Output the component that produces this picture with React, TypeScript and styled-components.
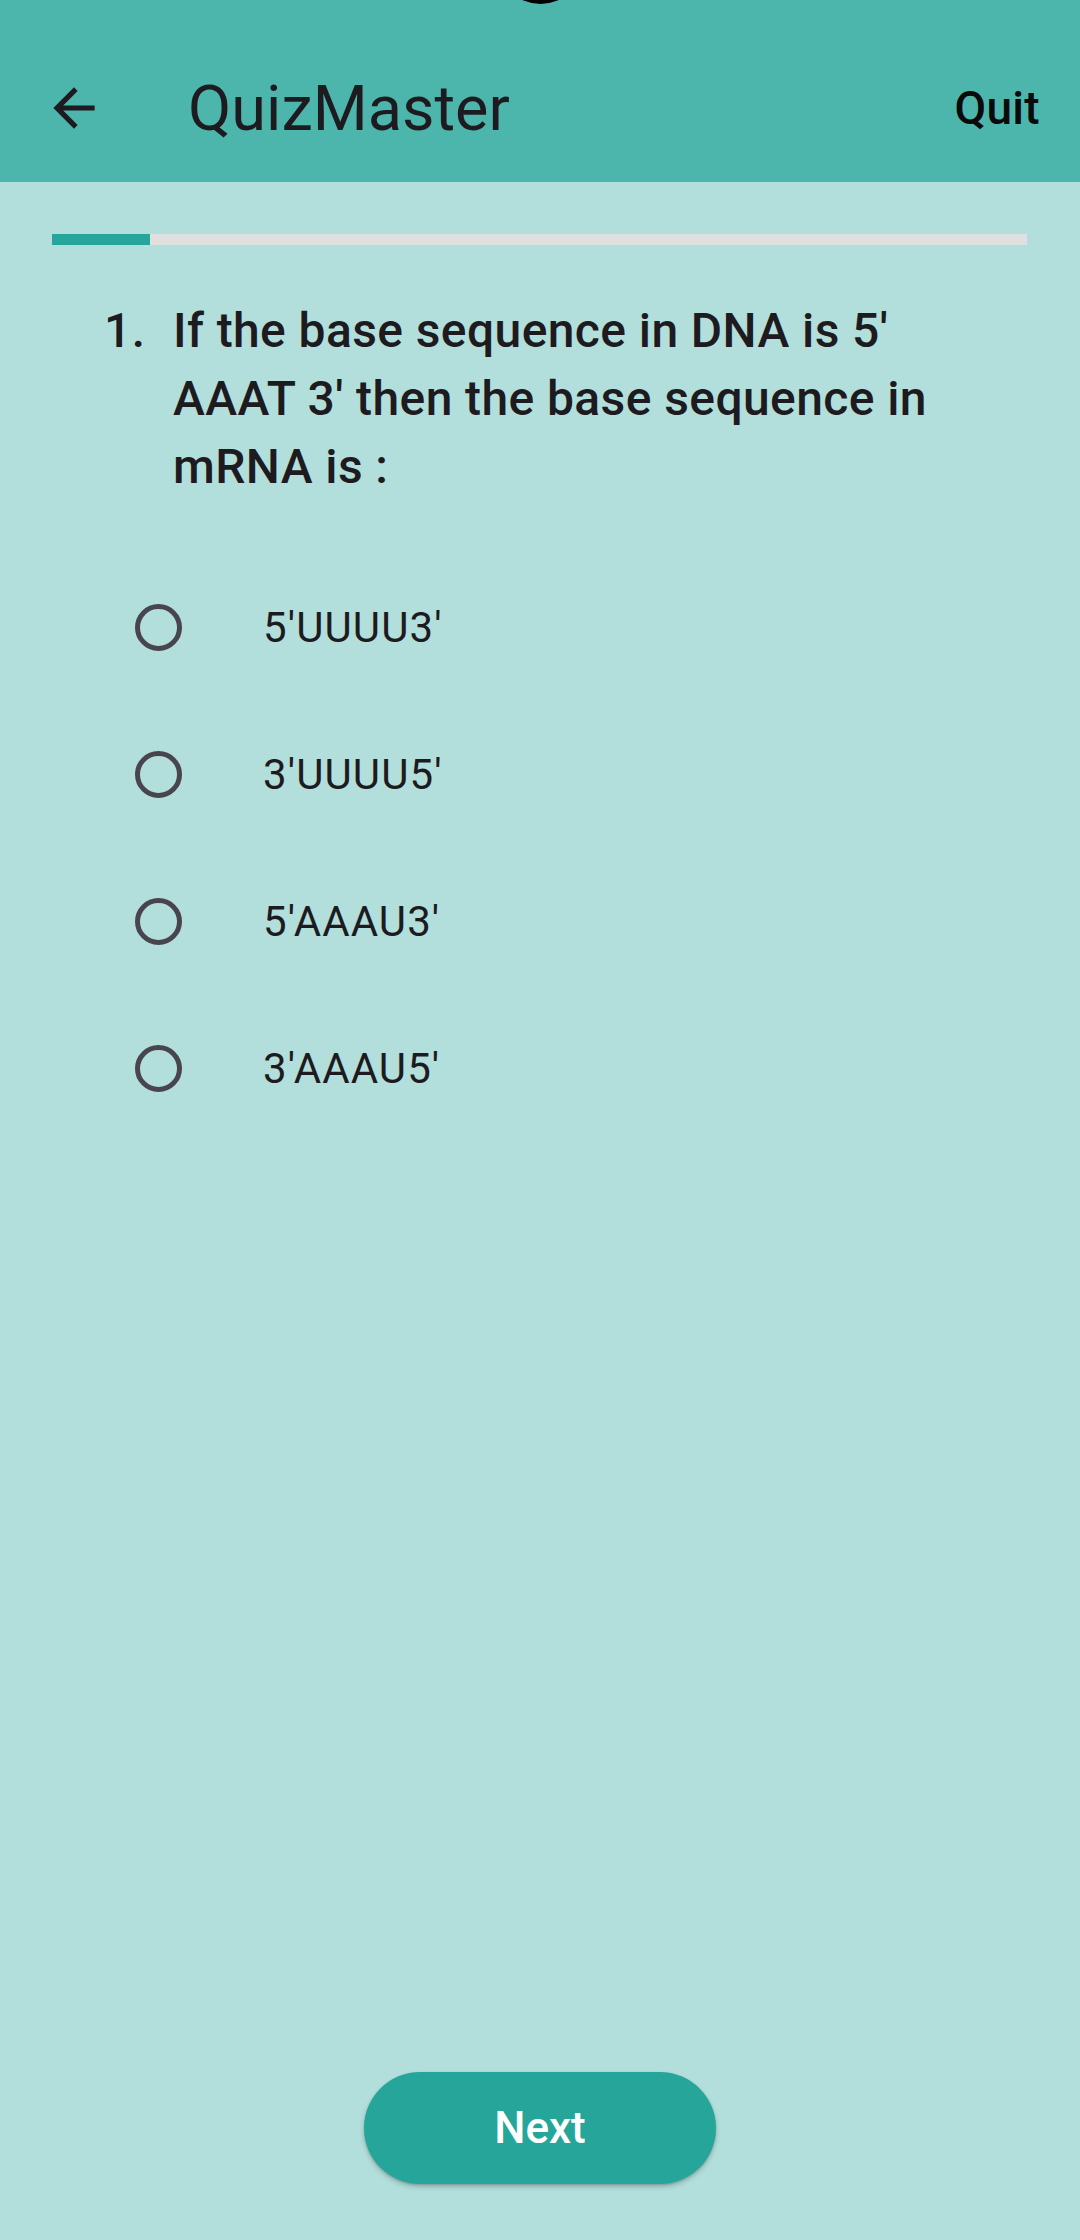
import React from "react";
import styled, { createGlobalStyle } from "styled-components";

const GlobalStyle = createGlobalStyle`
  html, body {
    margin: 0;
    padding: 0;
    background: #b2dfdb;
    font-family: Roboto, "Noto Sans", "Liberation Sans", sans-serif;
  }
  * { box-sizing: border-box; }
`;

const Screen = styled.div`
  position: relative;
  width: 1080px;
  height: 2240px;
  display: flex;
  flex-direction: column;
  background: #b2dfdb;
  overflow: hidden;
`;

const Camera = styled.div`
  position: absolute;
  left: 498px;
  top: -81px;
  width: 85px;
  height: 85px;
  border-radius: 50%;
  background: #000;
`;

const Header = styled.header`
  background: #4db6ac;
  height: 182px;
  padding-top: 34px;
  flex-shrink: 0;
`;

const Toolbar = styled.div`
  height: 148px;
  display: flex;
  align-items: center;
  padding: 0 40px 0 43px;
`;

const BackButton = styled.button`
  width: 62px;
  height: 62px;
  padding: 0;
  border: none;
  background: transparent;
  display: flex;
  align-items: center;
  justify-content: center;
  color: #1d1b20;
  svg { width: 62px; height: 62px; display: block; }
`;

const Title = styled.h1`
  margin: 0 0 0 83px;
  flex: 1;
  font-size: 63px;
  font-weight: 400;
  color: #1d1b20;
  line-height: 1;
`;

const QuitButton = styled.button`
  border: none;
  background: transparent;
  padding: 0;
  font-family: inherit;
  font-size: 46px;
  font-weight: 500;
  color: #0a0a0a;
  line-height: 1;
  letter-spacing: 0.3px;
`;

const Body = styled.main`
  flex: 1;
  display: flex;
  flex-direction: column;
`;

const Track = styled.div`
  margin: 52px 53px 0 52px;
  height: 11px;
  background: #e0e0e0;
`;

const Fill = styled.div`
  height: 100%;
  background: #26a69a;
`;

const Question = styled.div`
  display: flex;
  margin-top: 52px;
  padding: 0 100px 0 104px;
  font-size: 48px;
  font-weight: 500;
  line-height: 68px;
  letter-spacing: 0.4px;
  color: #1d1b20;
`;

const QNumber = styled.span`
  flex: 0 0 69px;
`;

const QText = styled.span`
  flex: 1;
`;

const Options = styled.ul`
  list-style: none;
  margin: 53px 0 0;
  padding: 0;
  display: flex;
  flex-direction: column;
`;

const Option = styled.li`
  height: 147px;
  display: flex;
  align-items: center;
  padding-left: 135px;
  gap: 81px;
`;

const Radio = styled.span`
  width: 47px;
  height: 47px;
  border-radius: 50%;
  border: 5px solid #49454f;
  flex-shrink: 0;
`;

const OptionLabel = styled.span`
  font-size: 42px;
  font-weight: 400;
  color: #1d1b20;
  letter-spacing: 1.1px;
`;

const NextButton = styled.button`
  margin: auto auto 56px;
  width: 352px;
  height: 112px;
  border: none;
  border-radius: 56px;
  background: #26a69a;
  color: #ffffff;
  font-family: inherit;
  font-size: 44px;
  font-weight: 500;
  box-shadow: 0 3px 5px rgba(0, 0, 0, 0.2), 0 1px 2px rgba(0, 0, 0, 0.15);
`;

const options = ["5'UUUU3'", "3'UUUU5'", "5'AAAU3'", "3'AAAU5'"];

export default function App() {
  const progress = 98 / 975;
  return (
    <Screen>
      <GlobalStyle />
      <Header>
        <Toolbar>
          <BackButton aria-label="Back">
            <svg viewBox="0 0 24 24" fill="currentColor">
              <path d="M20 11H7.83l5.59-5.59L12 4l-8 8 8 8 1.41-1.41L7.83 13H20v-2z" />
            </svg>
          </BackButton>
          <Title>QuizMaster</Title>
          <QuitButton>Quit</QuitButton>
        </Toolbar>
      </Header>
      <Camera />
      <Body>
        <Track>
          <Fill style={{ width: `${progress * 100}%` }} />
        </Track>
        <Question>
          <QNumber>1.</QNumber>
          <QText>If the base sequence in DNA is 5' AAAT 3' then the base sequence in mRNA is :</QText>
        </Question>
        <Options>
          {options.map((o) => (
            <Option key={o}>
              <Radio />
              <OptionLabel>{o}</OptionLabel>
            </Option>
          ))}
        </Options>
        <NextButton>Next</NextButton>
      </Body>
    </Screen>
  );
}
